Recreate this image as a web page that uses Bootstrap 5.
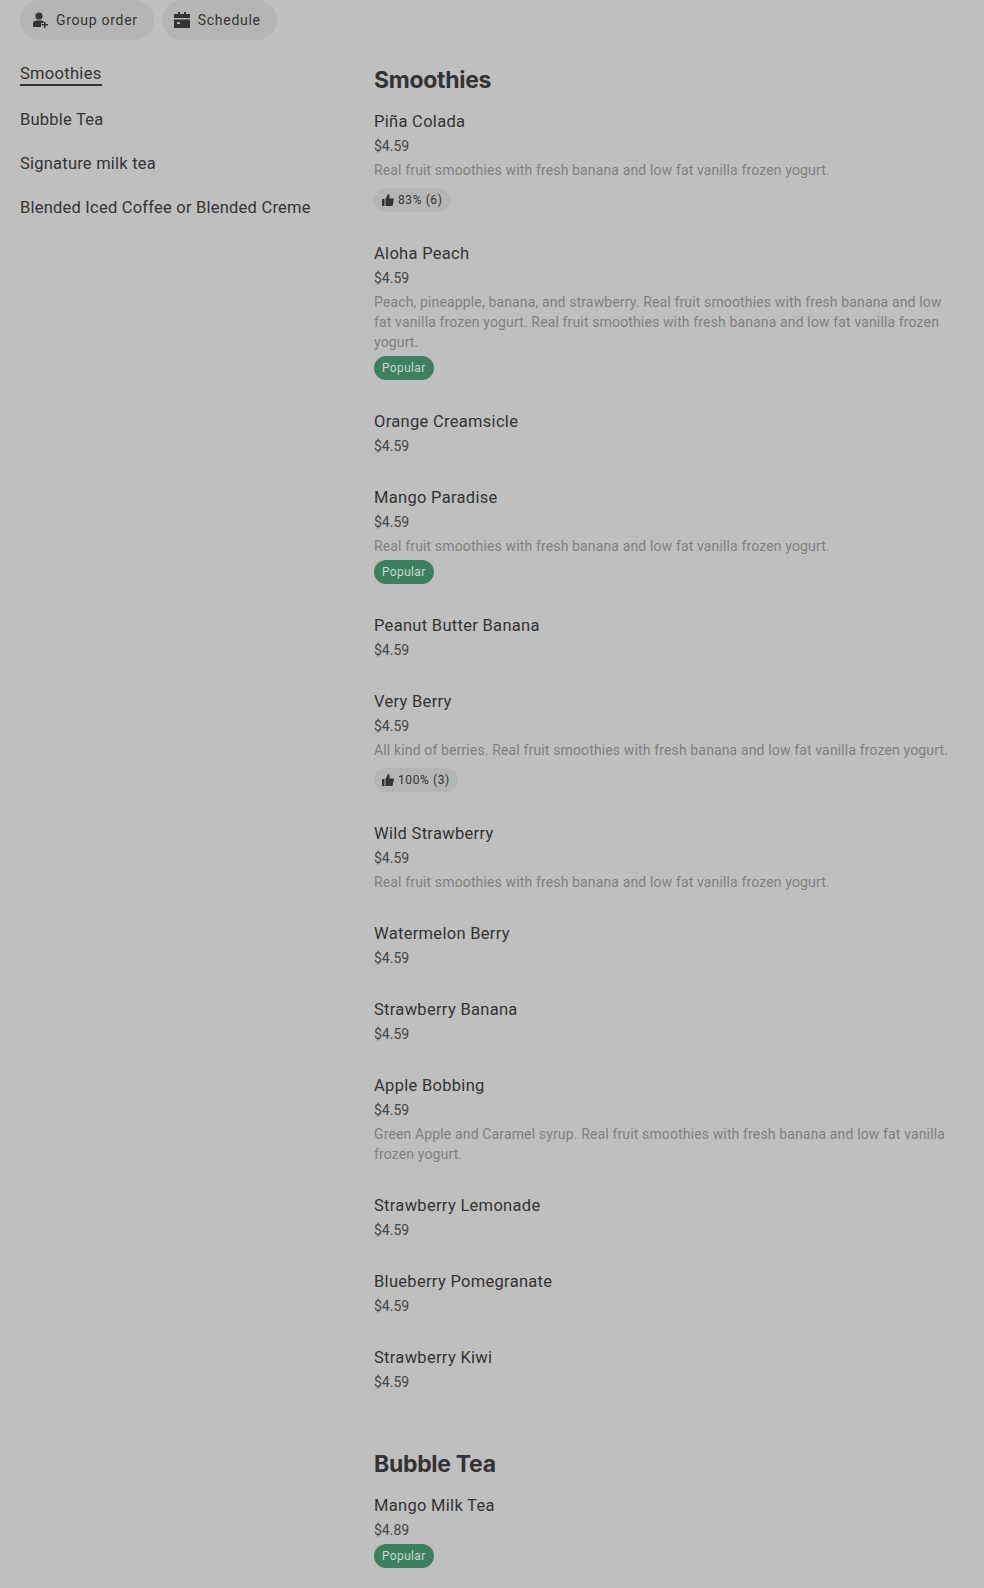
<!DOCTYPE html>
<html lang="en">
<head>
<meta charset="UTF-8">
<title>Menu</title>
<link rel="stylesheet" href="https://cdn.jsdelivr.net/npm/bootstrap@5.3.3/dist/css/bootstrap.min.css">
<style>
    html, body { height: 1588px; overflow: hidden; }
    body { background: #bfbfbf; color: #333; font-family: Roboto, "Liberation Sans", sans-serif; }
    .top-pills { margin-left: 20px; }
    .pill-btn { height: 40px; padding: 0 16px 0 12px; border-radius: 20px; background: #b5b5b5; color: #333; font-size: 14px; font-weight: 450; letter-spacing: 0.72px; }
    .body-wrap { margin-top: 24px; }
    .side-col { width: 374px; padding-left: 20px; }
    .side-link { display: table; font-size: 16.5px; font-weight: 450; color: #333; line-height: 20px; margin-bottom: 24px; letter-spacing: 0.22px; }
    .side-link.current { border-bottom: 2px solid #333; margin-bottom: 24px; font-weight: 400; letter-spacing: 0.3px; }
    .main-col { padding-right: 30px; }
    .sect-title { font-family: Inter, sans-serif; font-size: 23px; font-weight: 700; line-height: 32px; margin: 0 0 15px; color: #333; letter-spacing: -0.3px; }
    .sect-title.later { margin-top: 56px; }
    .item-row { margin-bottom: 31px; }
    .item-row.has-like { margin-bottom: 30px; }
    .item-name { font-size: 16.5px; font-weight: 450; line-height: 20px; padding-top: 1px; margin-bottom: 4px; letter-spacing: 0.3px; }
    .item-price { font-size: 14px; color: #444; line-height: 20px; margin-bottom: 4px; }
    .item-desc { font-size: 14px; line-height: 20px; color: #7f7f7f; letter-spacing: 0.14px; }
    .tag-like { height: 24px; padding: 0 8px; border-radius: 12px; background: #b5b5b5; font-size: 12px; margin-top: 8px; letter-spacing: 0.6px; }
    .tag-pop { display: table; height: 24px; line-height: 24px; padding: 0 8px; border-radius: 12px; background: #3d8060; color: #c3dbcd; font-size: 12px; margin-top: 4px; letter-spacing: 0.35px; }
</style>
</head>
<body>
    <div class="top-pills d-flex gap-2">
        <div class="pill-btn d-flex align-items-center gap-2">
            <svg width="16" height="16" viewBox="0 0 16 16" fill="#333"><circle cx="7" cy="4" r="3.6"/><path d="M1 15v-3.500C1 9.600 2.500 8.500 4.500 8.500h5c.8 0 1.400.2 2 .5v2H9v4H1z"/><path d="M12 10h1.500v2H16v1.500h-2.500V16H12v-2.500H9.500V12H12z"/></svg>
            <span>Group order</span>
        </div>
        <div class="pill-btn d-flex align-items-center gap-2">
            <svg width="16" height="16" viewBox="0 0 16 16" fill="#333"><path d="M4 0h2v2h4V0h2v2h4v4H0V2h4z"/><path d="M0 7.500h16V16H0zM3 10v2h3v-2z" fill-rule="evenodd"/></svg>
            <span>Schedule</span>
        </div>
    </div>
    <div class="body-wrap d-flex">
        <div class="side-col flex-shrink-0">
            <div class="side-link current">Smoothies</div>
            <div class="side-link">Bubble Tea</div>
            <div class="side-link">Signature milk tea</div>
            <div class="side-link">Blended Iced Coffee or Blended Creme</div>
        </div>
        <div class="main-col flex-grow-1">
            <h2 class="sect-title">Smoothies</h2>

            <div class="item-row has-like">
                <div class="item-name">Piña Colada</div>
                <div class="item-price">$4.59</div>
                <div class="item-desc">Real fruit smoothies with fresh banana and low fat vanilla frozen yogurt.</div>
                <div class="tag-like d-inline-flex align-items-center gap-1">
                    <svg width="12" height="12" viewBox="0 0 12 12" fill="#333"><path d="M0 5h2.500v7H0zM3.500 12V5L6 0c1 0 1.500.8 1.500 1.800V4.500H12L10.500 12z"/></svg>
                    <span>83% (6)</span>
                </div>
            </div>

            <div class="item-row">
                <div class="item-name">Aloha Peach</div>
                <div class="item-price">$4.59</div>
                <div class="item-desc">Peach, pineapple, banana, and strawberry. Real fruit smoothies with fresh banana and low fat vanilla frozen yogurt. Real fruit smoothies with fresh banana and low fat vanilla frozen yogurt.</div>
                <div class="tag-pop">Popular</div>
            </div>

            <div class="item-row">
                <div class="item-name">Orange Creamsicle</div>
                <div class="item-price">$4.59</div>
            </div>

            <div class="item-row">
                <div class="item-name">Mango Paradise</div>
                <div class="item-price">$4.59</div>
                <div class="item-desc">Real fruit smoothies with fresh banana and low fat vanilla frozen yogurt.</div>
                <div class="tag-pop">Popular</div>
            </div>

            <div class="item-row">
                <div class="item-name">Peanut Butter Banana</div>
                <div class="item-price">$4.59</div>
            </div>

            <div class="item-row has-like">
                <div class="item-name">Very Berry</div>
                <div class="item-price">$4.59</div>
                <div class="item-desc">All kind of berries. Real fruit smoothies with fresh banana and low fat vanilla frozen yogurt.</div>
                <div class="tag-like d-inline-flex align-items-center gap-1">
                    <svg width="12" height="12" viewBox="0 0 12 12" fill="#333"><path d="M0 5h2.500v7H0zM3.500 12V5L6 0c1 0 1.500.8 1.500 1.800V4.500H12L10.500 12z"/></svg>
                    <span>100% (3)</span>
                </div>
            </div>

            <div class="item-row">
                <div class="item-name">Wild Strawberry</div>
                <div class="item-price">$4.59</div>
                <div class="item-desc">Real fruit smoothies with fresh banana and low fat vanilla frozen yogurt.</div>
            </div>

            <div class="item-row">
                <div class="item-name">Watermelon Berry</div>
                <div class="item-price">$4.59</div>
            </div>

            <div class="item-row">
                <div class="item-name">Strawberry Banana</div>
                <div class="item-price">$4.59</div>
            </div>

            <div class="item-row">
                <div class="item-name">Apple Bobbing</div>
                <div class="item-price">$4.59</div>
                <div class="item-desc">Green Apple and Caramel syrup. Real fruit smoothies with fresh banana and low fat vanilla frozen yogurt.</div>
            </div>

            <div class="item-row">
                <div class="item-name">Strawberry Lemonade</div>
                <div class="item-price">$4.59</div>
            </div>

            <div class="item-row">
                <div class="item-name">Blueberry Pomegranate</div>
                <div class="item-price">$4.59</div>
            </div>

            <div class="item-row">
                <div class="item-name">Strawberry Kiwi</div>
                <div class="item-price">$4.59</div>
            </div>

            <h2 class="sect-title later">Bubble Tea</h2>

            <div class="item-row">
                <div class="item-name">Mango Milk Tea</div>
                <div class="item-price">$4.89</div>
                <div class="tag-pop">Popular</div>
            </div>
        </div>
    </div>
    <script src="https://cdn.jsdelivr.net/npm/bootstrap@5.3.3/dist/js/bootstrap.bundle.min.js"></script>
</body>
</html>
